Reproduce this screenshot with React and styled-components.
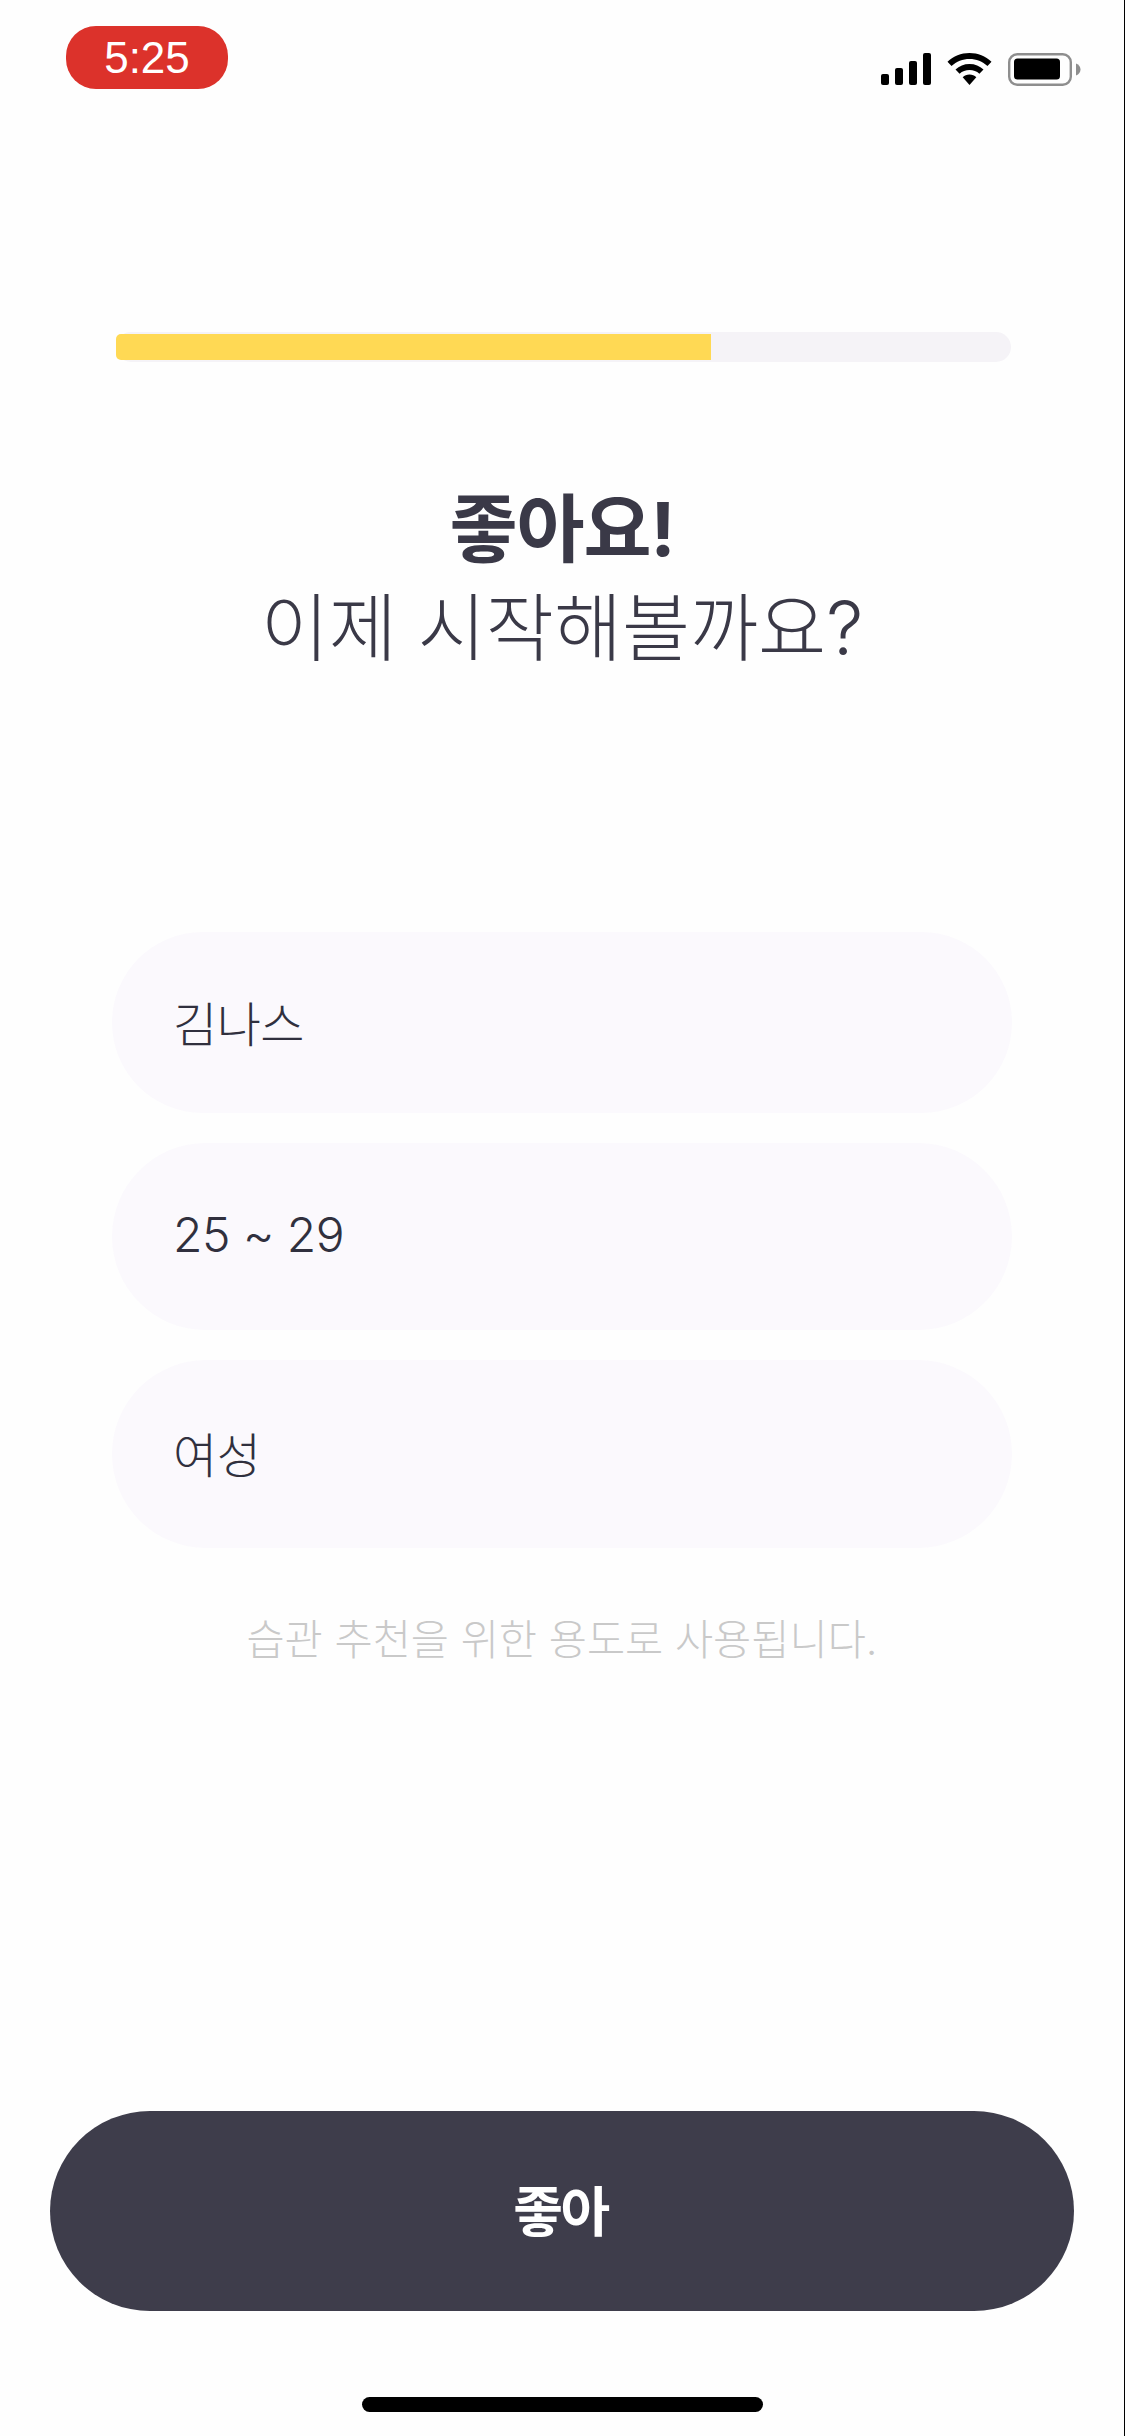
import React from "react";
import styled, { createGlobalStyle } from "styled-components";

const Global = createGlobalStyle`
  html, body { margin: 0; padding: 0; background: #fefefe; }
  #root { width: 1125px; height: 2436px; }
`;

const KR = `Inter, "Noto Sans CJK KR", "Noto Sans", sans-serif`;

const Page = styled.div`
  width: 1125px;
  height: 2436px;
  box-sizing: border-box;
  border-right: 1px solid #000;
  display: flex;
  flex-direction: column;
  background: #fefefe;
  overflow: hidden;
  font-family: ${KR};
`;

const StatusBar = styled.header`
  height: 63px;
  margin-top: 26px;
  padding: 0 43px 0 66px;
  display: flex;
  justify-content: space-between;
`;

const TimePill = styled.div`
  width: 162px;
  height: 63px;
  border-radius: 30px;
  background: #dc322b;
  color: #fff;
  font: 400 44px "Liberation Sans", Arial, sans-serif;
  display: flex;
  align-items: center;
  justify-content: center;
`;

const StatusIcons = styled.div`
  display: flex;
  align-items: flex-start;
  gap: 16px;
  padding-top: 27px;
`;

const Track = styled.div`
  width: 895px;
  height: 30px;
  margin: 243px 0 0 116px;
  padding: 2px 0;
  box-sizing: border-box;
  border-radius: 15px;
  background: #f5f3f7;
`;

const Fill = styled.div`
  height: 26px;
  border-radius: 5px 0 0 5px;
  background: #ffd954;
`;

const Heading = styled.h1`
  margin: 116px 0 0;
  text-align: center;
  color: #3a3947;
  font-size: 74px;
  line-height: 102px;
  font-weight: 300;
  letter-spacing: 0;
`;

const Strong = styled.strong`
  display: block;
  margin-bottom: -3px;
  font-weight: 700;
  letter-spacing: -1px;
`;

const Fields = styled.div`
  margin: 253px 0 0 112px;
  width: 900px;
  display: flex;
  flex-direction: column;
  gap: 30px;
`;

const Field = styled.div`
  height: ${(p) => p.$height}px;
  border-radius: 94px;
  padding: 0 0 4px 61px;
  box-sizing: border-box;
  background: #fbf9fd;
  color: #30303e;
  font-size: 48px;
  font-weight: 300;
  letter-spacing: -0.5px;
  display: flex;
  align-items: center;
`;

const Hint = styled.p`
  margin: 62px 0 0;
  text-align: center;
  color: #c9c9c9;
  font-size: 41.5px;
  line-height: 60px;
  font-weight: 300;
`;

const Action = styled.button`
  margin: 441px 0 0 50px;
  width: 1024px;
  height: 200px;
  padding: 0 3px 5px 0;
  border: 0;
  border-radius: 100px;
  background: #3e3d4b;
  color: #fff;
  font-family: ${KR};
  font-size: 54px;
  font-weight: 700;
  letter-spacing: -2.5px;
`;

const HomeIndicator = styled.div`
  width: 401px;
  height: 15px;
  margin: 86px 0 0 362px;
  border-radius: 8px;
  background: #000;
`;

const Signal = () => (
  <svg width="50" height="32" viewBox="0 0 50 32" aria-hidden="true">
    <rect x="0" y="21" width="8" height="11" rx="2" fill="#000" />
    <rect x="14" y="15" width="8" height="17" rx="2" fill="#000" />
    <rect x="28" y="8" width="8" height="24" rx="2" fill="#000" />
    <rect x="42" y="0" width="8" height="32" rx="2" fill="#000" />
  </svg>
);

const Wifi = () => (
  <svg width="45" height="32" viewBox="0 0 45 32" aria-hidden="true">
    <path d="M22.5 0C14 0 6.5 3.3 0.5 8.8L4.5 13C9.5 8.6 15.7 6 22.5 6S35.5 8.6 40.5 13L44.5 8.8C38.5 3.3 31 0 22.5 0Z" fill="#000" />
    <path d="M22.5 11C17 11 12.3 13 8.5 16.5L12.6 20.7C15.3 18.3 18.7 17 22.5 17S29.7 18.3 32.4 20.7L36.5 16.5C32.7 13 28 11 22.5 11Z" fill="#000" />
    <path d="M22.5 21.5C19.8 21.5 17.5 22.5 15.7 24.2L22.5 32L29.3 24.2C27.5 22.5 25.2 21.5 22.5 21.5Z" fill="#000" />
  </svg>
);

const Battery = () => (
  <svg width="73" height="33" viewBox="0 0 73 33" aria-hidden="true">
    <rect x="1.2" y="1.2" width="61.6" height="30.6" rx="8" fill="none" stroke="#8e8e8e" strokeWidth="2.4" />
    <rect x="6" y="5.5" width="46" height="21" rx="3.5" fill="#000" />
    <path d="M68 10.5C71 11.5 72.5 14 72.5 16.5S71 21.5 68 22.5Z" fill="#8e8e8e" />
  </svg>
);

export default function App() {
  return (
    <Page>
      <Global />
      <StatusBar>
        <TimePill>5:25</TimePill>
        <StatusIcons>
          <Signal />
          <Wifi />
          <Battery />
        </StatusIcons>
      </StatusBar>
      <Track>
        <Fill style={{ width: `${(595 / 895) * 100}%` }} />
      </Track>
      <Heading>
        <Strong>좋아요!</Strong>
        이제 시작해볼까요?
      </Heading>
      <Fields>
        <Field $height={181}>김나스</Field>
        <Field $height={187}>25 ~ 29</Field>
        <Field $height={188}>여성</Field>
      </Fields>
      <Hint>습관 추천을 위한 용도로 사용됩니다.</Hint>
      <Action>좋아</Action>
      <HomeIndicator />
    </Page>
  );
}
